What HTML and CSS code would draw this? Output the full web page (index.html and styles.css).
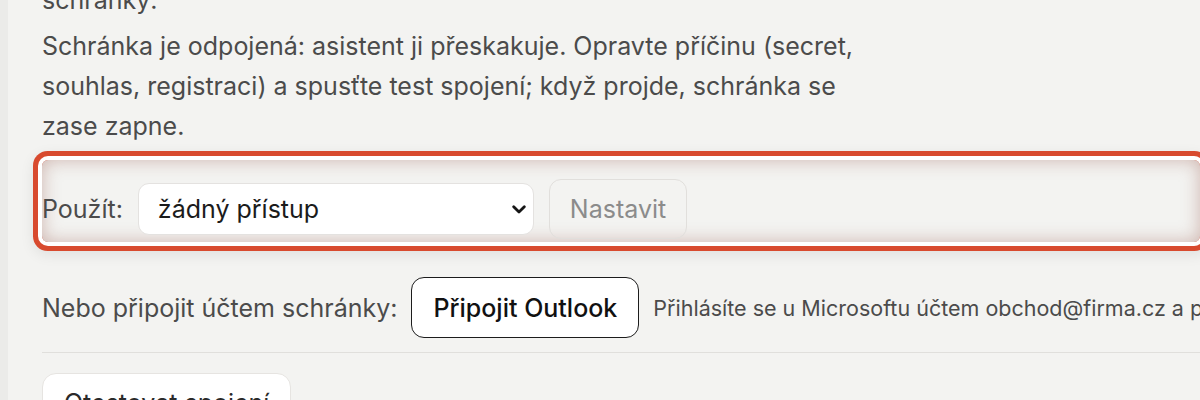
FILE: index.html
```html
<!DOCTYPE html>
<html lang="cs">
<head>
<meta charset="utf-8">
<link rel="stylesheet" href="styles.css">
</head>
<body>
<div class="page">
  <main class="panel">
    <p class="lead">Zvolte, jaký přístup bude mít asistent ke zprávám a ke složkám této schránky:</p>
    <p class="note">Schránka je odpojená: asistent ji přeskakuje. Opravte příčinu (secret, souhlas, registraci) a spusťte test spojení; když projde, schránka se zase zapne.</p>
    <div class="access-row">
      <label class="label" for="access">Použít:</label>
      <div class="select-wrap">
        <select id="access" class="select">
          <option>žádný přístup</option>
        </select>
        <svg class="chev" viewBox="0 0 14 9" width="14" height="9"><path d="M1.7 1.7 L7 7 L12.3 1.7" fill="none" stroke="#161616" stroke-width="2.8" stroke-linecap="round" stroke-linejoin="round"/></svg>
      </div>
      <button class="btn btn-disabled" disabled>Nastavit</button>
    </div>
    <div class="connect-row">
      <span class="label">Nebo připojit účtem schránky:</span>
      <button class="btn btn-outline">Připojit Outlook</button>
      <span class="hint">Přihlásíte se u Microsoftu účtem obchod@firma.cz a potvrdíte přístup ke schránce.</span>
    </div>
    <hr class="sep">
    <div class="test-row">
      <button class="btn btn-light">Otestovat spojení</button>
    </div>
  </main>
</div>
</body>
</html>
```

FILE: styles.css
```css
html, body {
  margin: 0;
  padding: 0;
  height: 100%;
  overflow: hidden;
}
body {
  background: #ebebe9;
  font-family: Inter, "Noto Sans", "Liberation Sans", sans-serif;
  color: #4b4b4b;
}
.page {
  height: 100%;
  padding-left: 8px;
}
.panel {
  height: 100%;
  background: #f3f3f1;
  padding-left: 34px;
  overflow: hidden;
}
.lead, .note {
  margin: 0;
  font-size: 25px;
  line-height: 40px;
  max-width: 830px;
}
.lead {
  margin-top: -60px;
  margin-bottom: 6px;
}
.note {
  margin-bottom: 14px;
}
.access-row {
  display: flex;
  align-items: center;
  gap: 15px;
  height: 62px;
  padding: 18px 0 2px 0;
  border-radius: 6px;
  box-shadow:
    inset 0 0 18px rgba(140, 70, 55, 0.36),
    0 0 0 4px #ffffff,
    0 0 0 9px #d84a2e,
    0 4px 14px 9px rgba(0, 0, 0, 0.08);
  white-space: nowrap;
}
.label {
  font-size: 25px;
  color: #4b4b4b;
  white-space: nowrap;
}
.select-wrap {
  position: relative;
  display: flex;
}
.select {
  appearance: none;
  -webkit-appearance: none;
  width: 396px;
  height: 52px;
  padding: 0 40px 0 19px;
  font-family: inherit;
  font-size: 25px;
  color: #1b1b1b;
  background: #ffffff;
  border: 1px solid #e4e2e0;
  border-radius: 11px;
}
.chev {
  position: absolute;
  right: 8px;
  top: 22px;
  pointer-events: none;
}
.btn {
  font-family: inherit;
  font-size: 25px;
  height: 60px;
  padding: 0 20px;
  border-radius: 12px;
  white-space: nowrap;
}
.btn-disabled {
  background: transparent;
  color: #8b8b8b;
  border: 1px solid #e1dfdc;
}
.connect-row {
  display: flex;
  align-items: center;
  gap: 14px;
  margin-top: 35px;
  white-space: nowrap;
}
.btn-outline {
  height: 61px;
  padding: 0 21px;
  background: #ffffff;
  color: #111111;
  font-weight: 500;
  border: 1.5px solid #1c1c1c;
  border-radius: 13px;
}
.hint {
  font-size: 21.5px;
  color: #4b4b4b;
  white-space: nowrap;
}
.sep {
  margin: 14px 0 0 0;
  border: 0;
  border-top: 1px solid #e0dfdc;
}
.test-row {
  margin-top: 20px;
}
.btn-light {
  background: #ffffff;
  color: #2a2a2a;
  border: 1px solid #e6e4e1;
  border-radius: 14px;
  padding: 0 21px;
}
```
